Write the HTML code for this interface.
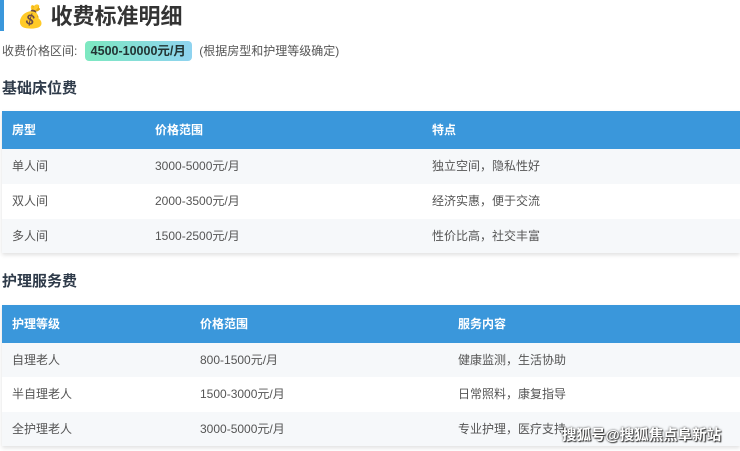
<!DOCTYPE html>
<html><head><meta charset="utf-8"><style>
body{margin:0;width:740px;height:451px;overflow:hidden;background:#fff;font-family:"Liberation Sans","Noto Sans CJK SC",sans-serif;color:#444;position:relative}
.bar{position:absolute;left:0;top:0;width:4px;height:31px;background:#3a97db}
.t{position:absolute;left:17px;top:2px;font-size:22px;font-weight:bold;color:#333;line-height:30px}
.sub{position:absolute;left:2px;top:41px;font-size:12px;color:#555;line-height:20px}
.pill{display:inline-block;background:linear-gradient(90deg,#7de8c0,#8fd3f0);color:#233;font-weight:bold;font-size:12.5px;padding:0 6px;border-radius:4px;margin:0 4px;line-height:20px}
.h{position:absolute;left:2px;font-size:15px;font-weight:bold;color:#2f3b4a}
.tb{position:absolute;left:2px;width:738px;box-shadow:0 2px 4px rgba(0,0,0,.12)}
.r{position:relative;height:35px;font-size:12px;color:#555;line-height:35px}
.r span{position:absolute;top:0}
.hd{height:38px;line-height:38px;background:#3a97db;color:#fff;font-weight:bold}
.g{background:#f6f8fa}
.wm{position:absolute;left:562px;top:424px;font-size:14.5px;font-weight:bold;color:#fff;text-shadow:0 0 2px #333,1px 1px 1px #333}
</style></head><body>
<div class="bar"></div>
<div class="t">💰 收费标准明细</div>
<div class="sub">收费价格区间: <span class="pill">4500-10000元/月</span> (根据房型和护理等级确定)</div>
<div class="h" style="top:77px">基础床位费</div>
<div class="tb" style="top:111px">
<div class="r hd"><span style="left:10px">房型</span><span style="left:153px">价格范围</span><span style="left:430px">特点</span></div>
<div class="r g"><span style="left:10px">单人间</span><span style="left:153px">3000-5000元/月</span><span style="left:430px">独立空间，隐私性好</span></div>
<div class="r"><span style="left:10px">双人间</span><span style="left:153px">2000-3500元/月</span><span style="left:430px">经济实惠，便于交流</span></div>
<div class="r g" style="height:34px;line-height:34px"><span style="left:10px">多人间</span><span style="left:153px">1500-2500元/月</span><span style="left:430px">性价比高，社交丰富</span></div>
</div>
<div class="h" style="top:270px">护理服务费</div>
<div class="tb" style="top:305px">
<div class="r hd"><span style="left:10px">护理等级</span><span style="left:198px">价格范围</span><span style="left:456px">服务内容</span></div>
<div class="r g" style="height:34px;line-height:34px"><span style="left:10px">自理老人</span><span style="left:198px">800-1500元/月</span><span style="left:456px">健康监测，生活协助</span></div>
<div class="r"><span style="left:10px">半自理老人</span><span style="left:198px">1500-3000元/月</span><span style="left:456px">日常照料，康复指导</span></div>
<div class="r g" style="height:34px;line-height:34px"><span style="left:10px">全护理老人</span><span style="left:198px">3000-5000元/月</span><span style="left:456px">专业护理，医疗支持</span></div>
</div>
<div class="wm">搜狐号@搜狐焦点阜新站</div>
</body></html>
